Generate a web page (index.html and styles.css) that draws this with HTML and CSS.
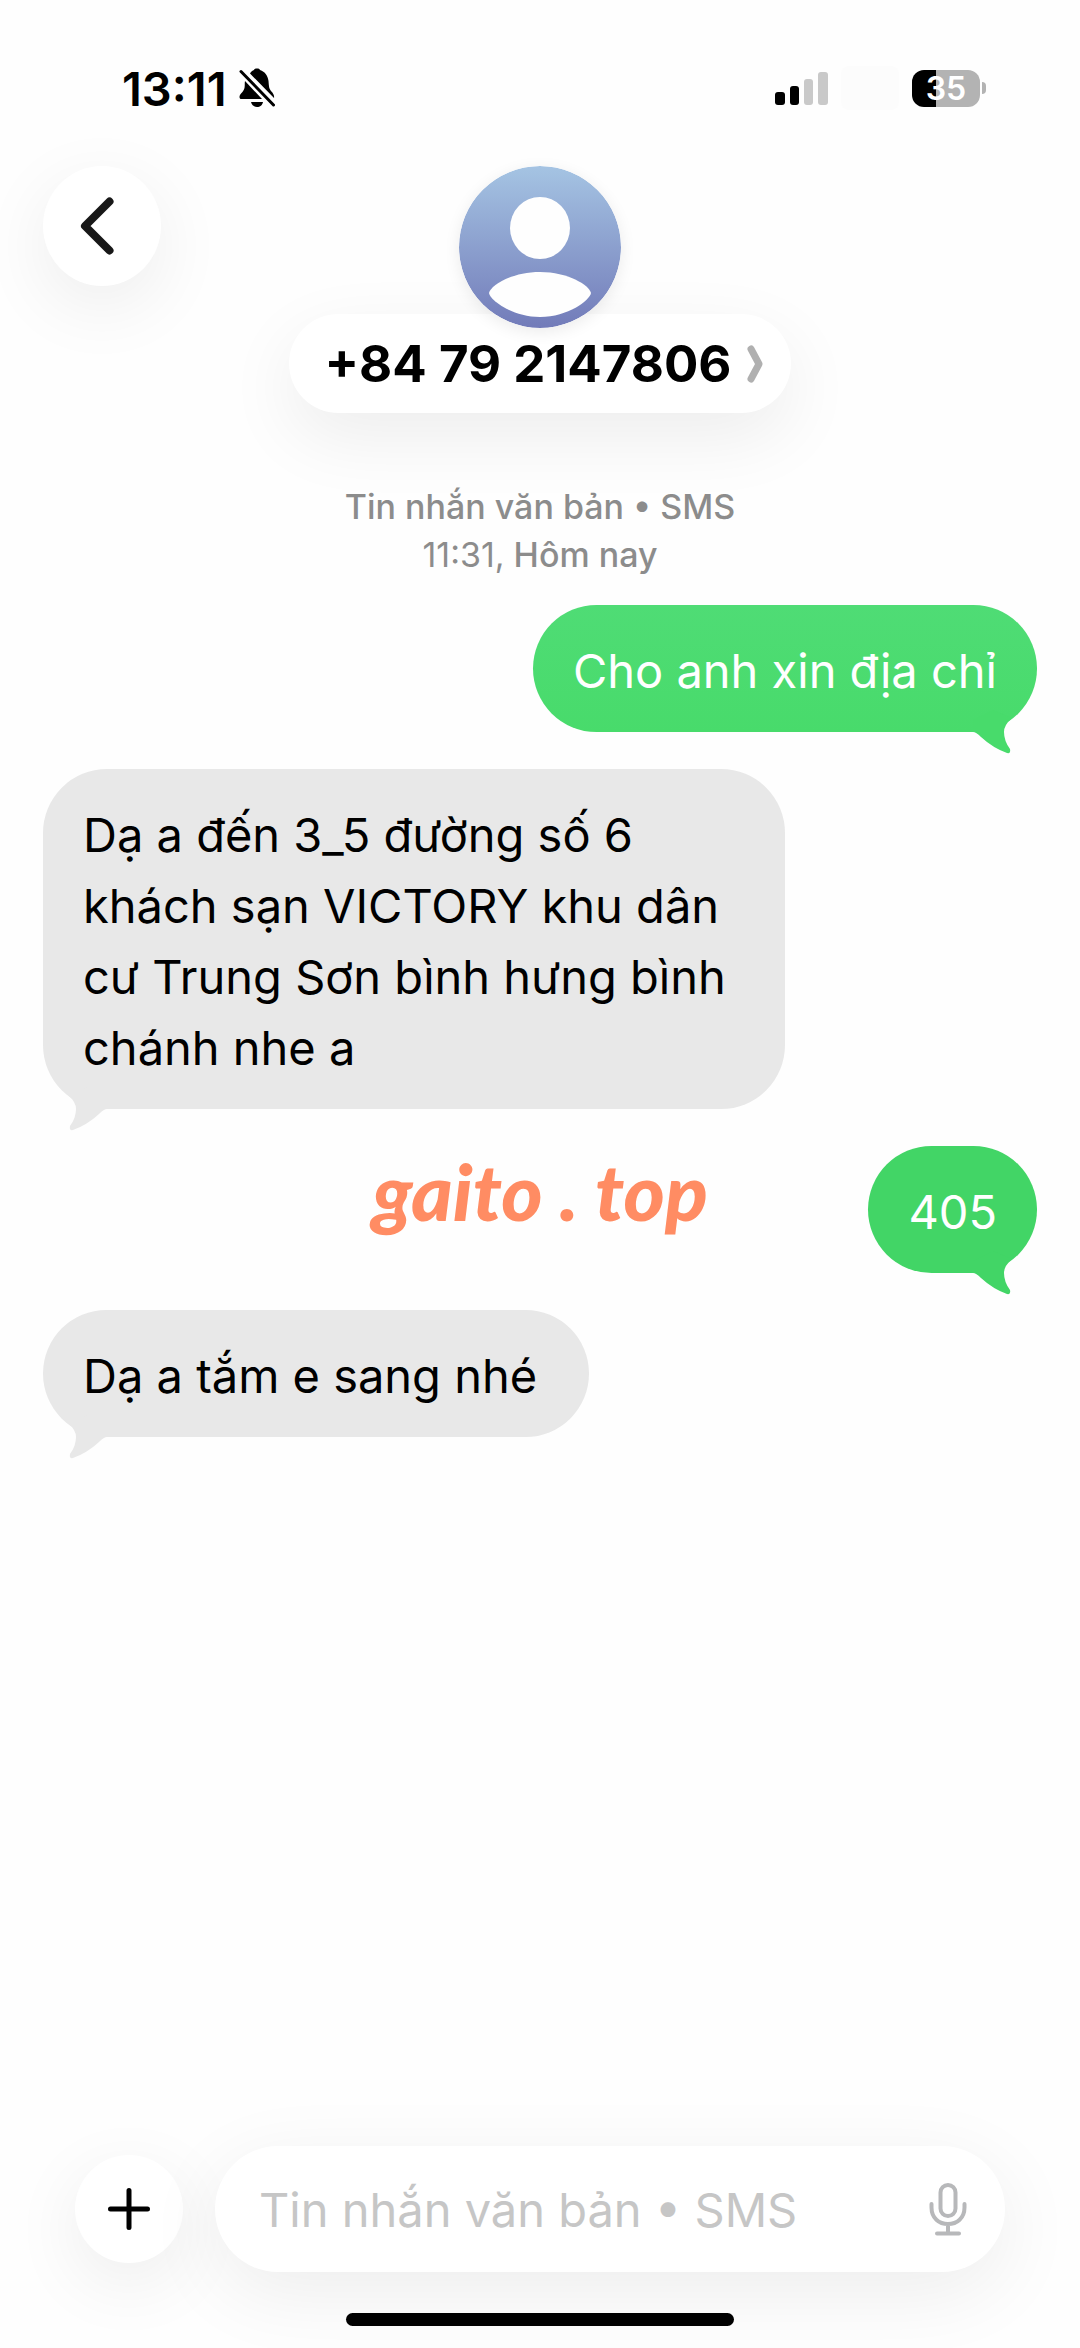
FILE: index.html
```html
<!DOCTYPE html>
<html lang="vi">
<head>
  <meta charset="utf-8">
  <meta name="viewport" content="width=device-width, initial-scale=1">
  <title>+84 79 2147806</title>
  <link rel="stylesheet" href="styles.css">
</head>
<body class="screen">
  <div class="status">
    <div class="status-left">
      <time class="clock">13:11</time>
      <svg class="bell" viewBox="0 0 36 40" aria-hidden="true">
        <path d="M11 5.5C12 3.5 13.500 2.500 15 2C15.500 .8 16.500 .5 18 .5S20.500 .8 21 2C26 3.500 29 8 29.500 13C30 19 30 21 33 24C34.500 26 35.500 28 35 30Z"/>
        <path d="M6 13L23 31H2.500C.5 31 0 29 1 27C2 25 5 23 5.500 20C6 17 5.500 15 6 13Z"/>
        <path d="M12 34H24C23.500 37 21 39 18 39S12.500 37 12 34Z"/>
        <path class="slash" d="M2 3.500L34.500 37"/>
      </svg>
    </div>
    <div class="status-right">
      <svg class="signal" viewBox="0 0 53 34" aria-hidden="true">
        <rect x="0" y="21" width="10" height="13" rx="3"/>
        <rect x="15" y="15" width="9" height="19" rx="3"/>
        <rect class="off" x="29" y="8" width="9" height="26" rx="3"/>
        <rect class="off" x="43" y="1" width="10" height="33" rx="3"/>
      </svg>
      <span class="network"></span>
      <span class="battery"><span class="battery-level">35</span></span>
    </div>
  </div>

  <header class="header">
    <button class="round back" type="button" aria-label="Quay lại">
      <svg class="back-icon" viewBox="0 0 34 58" aria-hidden="true"><path d="M29.500 4.500L5 29L29.500 53.500"/></svg>
    </button>
    <button class="contact" type="button">
      <svg class="avatar" viewBox="0 0 162 162" aria-hidden="true">
        <defs>
          <linearGradient id="sky" x1="0" y1="0" x2="0" y2="1">
            <stop offset="0" stop-color="#a5c4e3"/>
            <stop offset="1" stop-color="#727bb9"/>
          </linearGradient>
        </defs>
        <circle cx="81" cy="81" r="81" fill="url(#sky)"/>
        <ellipse cx="81" cy="62" rx="30" ry="31" fill="#fefefe"/>
        <path d="M30 127C32 119 53 106 81 106S130 119 132 127C131 134 109 151 81 151S31 134 30 127Z" fill="#fefefe"/>
      </svg>
      <span class="name">
        <span>+84 79 2147806</span>
        <svg class="name-arrow" viewBox="0 0 16 38" aria-hidden="true"><path d="M4 4L12 19L4 34"/></svg>
      </span>
    </button>
  </header>

  <main class="thread">
    <p class="stamp">Tin nhắn văn bản • SMS<br><time class="hour">11:31,</time> Hôm nay</p>
    <p class="bubble sent">Cho anh xin địa chỉ
      <svg class="tail" viewBox="0 0 64 54" aria-hidden="true"><path d="M0 32Q3 32 8 37Q20 48 34 53Q38 54 37 49Q31 41 31 32Q31 25 39 18L20 10L0 20Z"/></svg>
    </p>
    <p class="bubble received">Dạ a đến 3_5 đường số 6 khách sạn VICTORY khu dân cư Trung Sơn bình hưng bình chánh nhe a
      <svg class="tail" viewBox="0 0 64 54" aria-hidden="true"><path d="M0 32Q3 32 8 37Q20 48 34 53Q38 54 37 49Q31 41 31 32Q31 25 39 18L20 10L0 20Z"/></svg>
    </p>
    <div class="row">
      <p class="bubble sent later">405
        <svg class="tail" viewBox="0 0 64 54" aria-hidden="true"><path d="M0 32Q3 32 8 37Q20 48 34 53Q38 54 37 49Q31 41 31 32Q31 25 39 18L20 10L0 20Z"/></svg>
      </p>
      <span class="watermark">gaito . top</span>
    </div>
    <p class="bubble received">Dạ a tắm e sang nhé
      <svg class="tail" viewBox="0 0 64 54" aria-hidden="true"><path d="M0 32Q3 32 8 37Q20 48 34 53Q38 54 37 49Q31 41 31 32Q31 25 39 18L20 10L0 20Z"/></svg>
    </p>
  </main>

  <form class="composer">
    <button class="round plus" type="button" aria-label="Thêm">
      <svg class="plus-icon" viewBox="0 0 42 42" aria-hidden="true"><path d="M21 2.500V39.500M2.500 21H39.500"/></svg>
    </button>
    <div class="field">
      <input class="input" type="text" placeholder="Tin nhắn văn bản • SMS" aria-label="Tin nhắn văn bản">
      <button class="mic" type="button" aria-label="Đọc chính tả">
        <svg class="mic-icon" viewBox="0 0 36 52" aria-hidden="true"><rect x="10.500" y="2" width="15" height="31" rx="7.500"/><path d="M1.500 21V24.500C1.500 35 9 41 18 41S34.500 35 34.500 24.500V21M18 41V50M7 50.500H29"/></svg>
      </button>
    </div>
  </form>
  <div class="home-bar"></div>
</body>
</html>
```

FILE: styles.css
```css
* {
  box-sizing: border-box;
}

.screen {
  margin: 0;
  min-height: 100vh;
  display: flex;
  flex-direction: column;
  background: #fefefe;
  color: #000;
  font-family: Inter, "Noto Sans", sans-serif;
  font-size: 47px;
}

button,
input {
  margin: 0;
  padding: 0;
  border: 0;
  background: none;
  color: inherit;
  font: inherit;
}

svg {
  display: block;
  flex: none;
}

/* Status bar */
.status {
  display: flex;
  justify-content: space-between;
  padding: 62px 94px 0 122px;
}

.status-left,
.status-right {
  display: flex;
  align-items: center;
  height: 52px;
}

.status-left {
  gap: 12px;
}

.clock {
  font-size: 47px;
  font-weight: 600;
}

.bell {
  width: 36px;
  height: 40px;
}

.slash {
  fill: none;
  stroke: #000;
  stroke-width: 3;
  stroke-linecap: round;
}

.signal {
  width: 53px;
  height: 34px;
}

.off {
  fill: #c9c9c9;
}

.network {
  width: 58px;
  height: 44px;
  margin: 0 13px;
  border-radius: 8px;
  background: #fcfcfc;
}

.battery {
  display: flex;
  align-items: center;
}

.battery-level {
  width: 68px;
  height: 37px;
  border-radius: 12px;
  background: linear-gradient(90deg, #000 24px, #b3b3b3 24px);
  color: #fff;
  font-size: 32px;
  font-weight: 600;
  line-height: 37px;
  text-align: center;
}

.battery::after {
  content: "";
  width: 4px;
  height: 12px;
  margin-left: 2px;
  border-radius: 0 6px 6px 0;
  background: #b3b3b3;
}

/* Header */
.header {
  display: grid;
  grid-template-columns: 1fr auto 1fr;
  align-items: start;
  padding: 52px 43px 0;
}

.round {
  display: grid;
  place-items: center;
  border-radius: 50%;
  background: #fff;
  box-shadow: 0 20px 72px rgba(0, 0, 0, 0.07);
}

.back {
  width: 118px;
  height: 120px;
}

.back-icon {
  width: 34px;
  height: 58px;
  margin-right: 11px;
}

.back-icon path {
  fill: none;
  stroke: #181818;
  stroke-width: 8;
  stroke-linecap: round;
  stroke-linejoin: round;
}

.contact {
  display: flex;
  flex-direction: column;
  align-items: center;
}

.avatar {
  z-index: 1;
  width: 162px;
  height: 162px;
  border-radius: 50%;
  box-shadow: 0 4px 16px rgba(0, 0, 0, 0.08);
}

.name {
  display: flex;
  align-items: center;
  gap: 16px;
  height: 99px;
  margin-top: -14px;
  padding: 0 28px 0 36px;
  border-radius: 50px;
  background: #fff;
  box-shadow: 0 24px 72px rgba(0, 0, 0, 0.07);
  font-size: 51px;
  font-weight: 700;
}

.name-arrow {
  width: 16px;
  height: 38px;
}

.name-arrow path {
  fill: none;
  stroke: #b0b0b0;
  stroke-width: 7;
  stroke-linecap: round;
  stroke-linejoin: round;
}

/* Conversation */
.thread {
  flex: 1;
  display: flex;
  flex-direction: column;
  align-items: flex-start;
  gap: 37px;
  padding: 70px 43px;
}

.stamp {
  align-self: center;
  margin: 0 0 -11px;
  color: #8c8c8c;
  font-size: 34px;
  font-weight: 500;
  line-height: 48px;
  text-align: center;
}

.hour {
  font-weight: 400;
}

.bubble {
  position: relative;
  max-width: 742px;
  margin: 0;
  padding: 30px 40px 26px;
  border-radius: 64px;
  line-height: 71px;
}

.sent {
  align-self: flex-end;
  background: linear-gradient(#4fdc75, #48db6b);
  color: #fff;
}

.later {
  background: #42d566;
}

.received {
  padding-right: 52px;
  background: #e8e8e8;
}

.tail {
  position: absolute;
  right: 0;
  bottom: -22px;
  width: 64px;
  height: 54px;
  fill: #48db6b;
}

.later .tail {
  fill: #42d566;
}

.received .tail {
  right: auto;
  left: 0;
  transform: scaleX(-1);
  fill: #e8e8e8;
}

.row {
  position: relative;
  align-self: stretch;
  display: flex;
  justify-content: flex-end;
}

.watermark {
  position: absolute;
  inset: 0;
  color: #ff8c63;
  font-family: Lato, sans-serif;
  font-size: 79px;
  font-style: italic;
  font-weight: 900;
  line-height: 90px;
  text-align: center;
}

/* Composer */
.composer {
  display: flex;
  align-items: center;
  gap: 32px;
  padding: 0 75px;
}

.plus {
  flex: none;
  width: 108px;
  height: 108px;
}

.plus-icon {
  width: 42px;
  height: 42px;
}

.plus-icon path {
  stroke: #000;
  stroke-width: 5;
  stroke-linecap: round;
}

.field {
  flex: 1;
  display: flex;
  align-items: center;
  min-width: 0;
  height: 126px;
  padding: 0 39px 0 44px;
  border-radius: 64px;
  background: #fff;
  box-shadow: 0 20px 80px rgba(0, 0, 0, 0.07);
}

.input {
  flex: 1;
  min-width: 0;
  outline: 0;
}

.input::placeholder {
  color: #c6c6c6;
  opacity: 1;
}

.mic-icon {
  width: 36px;
  height: 52px;
  fill: none;
  stroke: #b7b8ba;
  stroke-width: 4;
  stroke-linecap: round;
  overflow: visible;
}

.home-bar {
  align-self: center;
  width: 36%;
  height: 13px;
  margin: 41px 0 22px;
  border-radius: 7px;
  background: #000;
}
```
